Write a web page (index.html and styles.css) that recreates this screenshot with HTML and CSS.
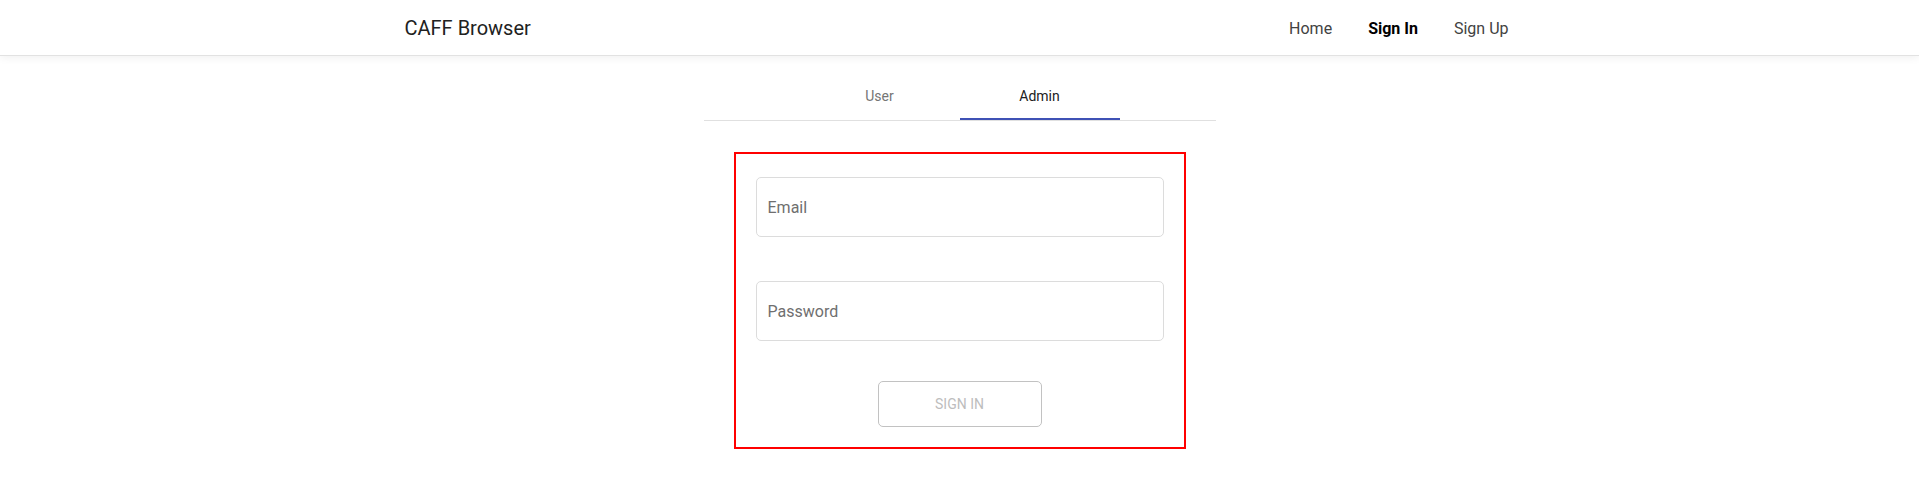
FILE: index.html
```html
<!DOCTYPE html>
<html lang="en">
<head>
<meta charset="utf-8">
<title>CAFF Browser</title>
<link rel="stylesheet" href="styles.css">
</head>
<body>
<header class="topbar">
  <div class="container topbar-inner">
    <a class="brand" href="#">CAFF Browser</a>
    <nav class="nav">
      <a class="nav-link" href="#">Home</a>
      <a class="nav-link active" href="#">Sign In</a>
      <a class="nav-link" href="#">Sign Up</a>
    </nav>
  </div>
</header>
<main class="main">
  <div class="tabs">
    <div class="tab">User</div>
    <div class="tab tab-active">Admin</div>
  </div>
  <form class="login-box">
    <input class="field" type="email" placeholder="Email">
    <input class="field field-pass" type="password" placeholder="Password">
    <button class="btn" type="button" disabled>SIGN IN</button>
  </form>
</main>
</body>
</html>
```

FILE: styles.css
```css
* { box-sizing: border-box; }
html, body { margin: 0; padding: 0; background: #fff; }
body {
  font-family: Roboto, "Liberation Sans", sans-serif;
  color: #212121;
}
.topbar {
  height: 56px;
  background: #fff;
  border-bottom: 1px solid #e2e2e2;
  box-shadow: 0 2px 8px rgba(0,0,0,0.06);
}
.container {
  width: 1140px;
  margin: 0 auto;
  padding: 0 13px 0 15px;
}
.topbar-inner {
  height: 55px;
  display: flex;
  align-items: center;
  justify-content: space-between;
}
.brand {
  font-size: 20px;
  color: #212121;
  text-decoration: none;
  padding-top: 1px;
}
.nav {
  display: flex;
  gap: 20px;
  padding-top: 1px;
}
.nav-link {
  font-size: 16px;
  color: #424242;
  text-decoration: none;
  padding: 0 8px;
}
.nav-link.active {
  color: #000;
  font-weight: 700;
}
.main {
  display: flex;
  flex-direction: column;
  align-items: center;
  padding-top: 16px;
}
.tabs {
  width: 512px;
  display: flex;
  justify-content: center;
  border-bottom: 1px solid #e0e0e0;
}
.tab {
  width: 160px;
  height: 48px;
  display: flex;
  align-items: center;
  justify-content: center;
  font-size: 14px;
  color: #757575;
}
.tab-active {
  color: #212121;
  box-shadow: inset 0 -2px 0 #3f51b5;
}
.login-box {
  margin-top: 31px;
  width: 452px;
  border: 2px solid #ff0000;
  padding: 23px 20px 20px;
  display: flex;
  flex-direction: column;
  align-items: center;
}
.field {
  width: 408px;
  height: 60px;
  border: 1px solid #dcdcdc;
  border-radius: 5px;
  padding: 0 11px;
  font-family: Roboto, "Liberation Sans", sans-serif;
  font-size: 16px;
  color: #212121;
  outline: none;
}
.field::placeholder { color: #6f6f6f; }
.field-pass { margin-top: 44px; }
.btn {
  margin-top: 40px;
  width: 164px;
  height: 46px;
  background: #fff;
  border: 1px solid #c2c2c2;
  border-radius: 5px;
  font-family: Roboto, "Liberation Sans", sans-serif;
  font-size: 14px;
  color: #bdbdbd;
}
```
